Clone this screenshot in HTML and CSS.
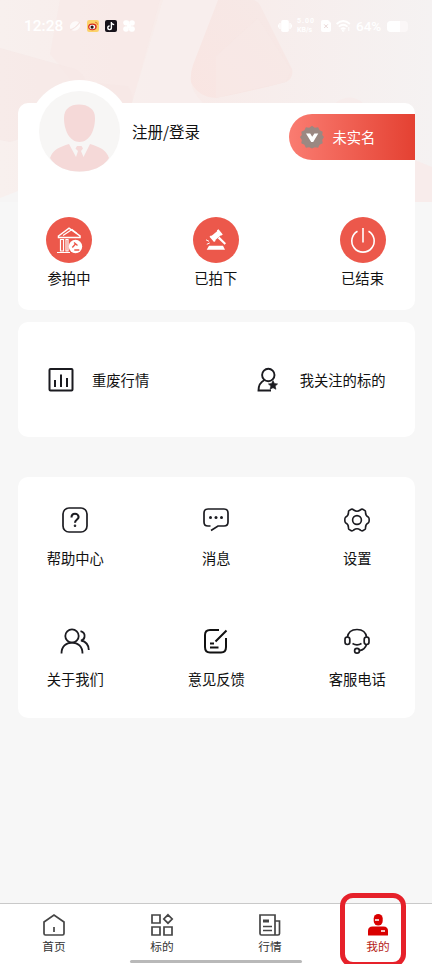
FILE: index.html
```html
<!DOCTYPE html>
<html lang="zh-CN">
<head>
<meta charset="utf-8">
<meta name="viewport" content="width=device-width, initial-scale=1">
<title>我的</title>
<link rel="stylesheet" href="styles.css">
</head>
<body>
<div class="app">
  <svg class="hero" viewBox="0 0 432 202" preserveAspectRatio="none">
    <defs>
      <linearGradient id="sky" x1="0" x2="1"><stop offset="0" stop-color="#f8f0ee"/><stop offset=".45" stop-color="#f8ebe9"/><stop offset="1" stop-color="#f5f2f2"/></linearGradient>
      <linearGradient id="gem" x1="0" x2="1" y1="1" y2="0"><stop offset="0" stop-color="#f9e5e2"/><stop offset="1" stop-color="#f6e9e7"/></linearGradient>
    </defs>
    <path fill="url(#sky)" d="M0 0h432v202H0z"/>
    <path fill="#f6e5e3" opacity=".5" d="M0 48 75 69Q84 73 86 82L128 86Q134 94 132 103L10 142 0 140z"/>
    <path fill="#f7e8e6" opacity=".5" d="M60 0H160L132 103H90L50 54z"/>
    <path fill="#f8f0ee" opacity=".7" d="M163 0H220L191 82Q192 92 203 103H132z"/>
    <path fill="url(#gem)" d="M218 0H254Q259 2 261 7L292 69Q294 78 286 82Q253 91 216 98Q198 97 191 82Q190 74 193 65z"/>
    <path fill="#f7eae8" opacity=".5" d="M216 56 258 18 291 70 286 82 216 98z"/>
    <path fill="#f7eceb" d="M335 103Q350 92 363 103z"/>
    <path fill="#f8eceb" d="M415 160 432 167V202H415z"/>
    <path fill="#f6f5f5" d="M0 198 18 191V202H0z"/>
  </svg>

  <header class="status">
    <div class="status-side">
      <span class="clock">12:28</span>
      <svg class="app-icon" viewBox="0 0 12 12"><ellipse cx="6" cy="6" rx="5.4" ry="4.5" transform="rotate(-35 6 6)" fill="#fff" opacity=".75"/><path d="M1 10Q7 8 11 2" fill="none" stroke="#f4e3e1" stroke-width="1.2"/></svg>
      <svg class="app-icon" viewBox="0 0 12 12"><rect width="12" height="12" rx="2.2" fill="#fcd26a"/><ellipse cx="5.4" cy="6.8" rx="4.3" ry="3.4" fill="#d52b20"/><ellipse cx="5.3" cy="7" rx="2.9" ry="2.2" fill="#fff"/><circle cx="5.1" cy="7.1" r="1.6" fill="#251716"/><path d="M8 2.2Q10.5 2 10.4 4.8" fill="none" stroke="#e5752f"/></svg>
      <svg class="app-icon" viewBox="0 0 12 12"><rect width="12" height="12" rx="2" fill="#17121a"/><path d="M6.4 2V7.8A1.8 1.8 0 1 1 4.6 6M6.4 2Q6.8 4.4 9.2 4.6" fill="none" stroke="#fff" stroke-width="1.4"/></svg>
      <svg class="app-icon" viewBox="0 0 12 12" fill="#fff"><rect x=".2" y=".2" width="6" height="5.3" rx="2.4"/><circle cx="9" cy="3" r="2.8"/><circle cx="3" cy="9" r="2.8"/><rect x="6" y="6.2" width="5.8" height="5.6" rx="2.4"/><path d="M4 4h4v4H4z"/></svg>
    </div>
    <div class="status-side status-right">
      <svg class="vibrate" viewBox="0 0 14 12" fill="#fff"><rect x="3.2" width="7.6" height="12" rx="1.8"/><rect x="1.3" y="3" width="1.3" height="6"/><rect x="0" y="4.5" width="1" height="3"/><rect x="11.4" y="3" width="1.3" height="6"/><rect x="13" y="4.5" width="1" height="3"/></svg>
      <span class="speed"><span class="speed-value">5.00</span><span>KB/s</span></span>
      <svg class="sim" viewBox="0 0 10 12"><path d="M2 0H7L10 3V10Q10 12 8 12H2Q0 12 0 10V2Q0 0 2 0" fill="#fff"/><path d="m3.2 4.4 3.6 3.6m0-3.6L3.2 8" stroke="#e8d6d5"/></svg>
      <svg class="wifi" viewBox="0 0 15 12" fill="none" stroke="#fff" stroke-width="1.7"><path d="M.6 4Q7.2-2 13.9 4M2.8 6.7Q7.2 2.8 11.6 6.7M5 9.1Q7.2 7.2 9.4 9.1"/><circle cx="7.2" cy="10.6" r=".4"/><path d="M12.8 7v4" stroke-width="1"/></svg>
      <span class="percent">64%</span>
      <span class="battery"><span class="battery-level"></span></span>
    </div>
  </header>

  <main>
    <section class="card profile">
      <div class="profile-head">
        <div class="avatar">
          <svg viewBox="0 0 81 81"><circle cx="40.5" cy="40.5" r="40.5" fill="#f7f6f5"/><path fill="#f5d9d8" d="M40 13.5C49 13.500 56 18 56 27C56 40 50 51 40.500 51C31 51 25 40 25 27C25 18 31 13.500 40 13.500z"/><path fill="#f5d9d8" d="M30 53 37 66 39 60 36.500 57.500 38 55H42.500L44 57.500 42 60 44.500 66 51 53C60 56 67 58 70 67C64 76 53 80.500 40.500 80.500C28 80.500 17 76 11 67C14 58 21 56 30 53z"/></svg>
        </div>
        <span class="login">注册/登录</span>
        <div class="verify">
          <svg viewBox="0 0 24 24"><path d="m12 .8 2.8 1.9 3.3-.5 1.5 3.1 3.1 1.4-.5 3.4L24 12l-1.800 2.900.5 3.400-3.100 1.400-1.500 3.100-3.300-.5L12 23.400l-2.800-1.100-3.300.5-1.500-3.100-3.100-1.400.5-3.400L0 12l1.800-1.900-.5-3.400 3.100-1.400 1.500-3.100 3.300.5z" fill="#9b8882"/><path d="M6 8.400h4.200l2 3.300 2.200-3.300h3.900L13.200 17h-2z" fill="#fff"/></svg>
          <span>未实名</span>
        </div>
      </div>
      <div class="bids">
        <div class="bid">
          <svg viewBox="0 0 46 46"><circle cx="23" cy="23" r="23" fill="#ec584b"/><g fill="none" stroke="#fff" stroke-width="1.200"><path d="M12.500 19 23 11.200 34 19V20.500H12.500z" stroke-width="1.500"/><path d="m17 18.500 9-6 5 4"/><path d="M14.500 22.500V34h3V22.500zM20 22.500V34h2V22.500zM11 35.500H24"/></g><circle cx="29.500" cy="29.500" r="6.700" fill="#fff"/><path d="m28 25.500 3.500 3m-2-1.500-3.200 3.500m2 2.500h5" stroke="#ec584b" stroke-width="1.400"/></svg>
          <span>参拍中</span>
        </div>
        <div class="bid">
          <svg viewBox="0 0 46 46"><circle cx="23" cy="23" r="23" fill="#ec584b"/><g fill="#fff"><path d="m16.500 19.800 1.400-1.300.8.300 5.400-4.600-.1-.9 1.500-1.100 4.300 5.200-1.400 1.200-.8-.2-5.200 4.600.1.900-1.500 1.200z"/><path d="m24.700 21.300 1.800-1.600 6.500 6.600-1.400 1.400z"/><path d="M16 28.700H30L32 32.700H13.700z"/></g><path d="m13 22.800 3 1.500m-2.200 3 3-1.400" stroke="#fff" fill="none"/></svg>
          <span>已拍下</span>
        </div>
        <div class="bid">
          <svg viewBox="0 0 46 46"><circle cx="23" cy="23" r="23" fill="#ec584b"/><path d="M17.500 14.200A11.200 11.200 0 1 0 28.500 14.200M23 11V25.500" fill="none" stroke="#fff" stroke-width="1.600"/></svg>
          <span>已结束</span>
        </div>
      </div>
    </section>

    <section class="card shortcuts">
      <div class="shortcut">
        <svg viewBox="0 0 26 26" fill="none" stroke="#1b1b20" stroke-width="2"><rect x="1.500" y="2" width="23" height="21.500" rx="1"/><path d="M7 13v7M13 7.500V20M19 11v9"/></svg>
        <span>重废行情</span>
      </div>
      <div class="shortcut">
        <svg viewBox="0 0 26 26" fill="none" stroke="#1b1b20" stroke-width="1.900"><circle cx="13.300" cy="8" r="6.200"/><path d="M9.500 13C5.500 15 3.500 18.500 3.500 23.500H16"/><path d="m18 13.600 1.400 2.900 3.200.4-2.400 2.200.7 3.200-2.900-1.600-2.900 1.600.7-3.200-2.400-2.200 3.200-.4z" fill="#1b1b20" stroke-width=".6"/></svg>
        <span>我关注的标的</span>
      </div>
    </section>

    <section class="card services">
      <div class="service">
        <svg viewBox="0 0 30 30" fill="none" stroke="#1b1b20" stroke-width="1.700"><rect x="3" y="3" width="24" height="24" rx="6"/><path d="M11.500 12.500C11.500 10 13 8.800 15 8.800S18.600 10.200 18.600 12C18.600 14.500 15 14.500 15 17.800" stroke-width="2.100"/><circle cx="15" cy="20.800" r=".5" stroke-width="1.600"/></svg>
        <span>帮助中心</span>
      </div>
      <div class="service">
        <svg viewBox="0 0 30 30" fill="none" stroke="#1b1b20" stroke-width="1.700"><path d="M9.500 21H7Q3 21 3 17V8Q3 4 7 4H23Q27 4 27 8V17Q27 21 23 21H17L10 25.500"/><g fill="#1b1b20" stroke="none"><circle cx="9.500" cy="12.500" r="1.500"/><circle cx="15" cy="12.500" r="1.500"/><circle cx="20.500" cy="12.500" r="1.500"/></g></svg>
        <span>消息</span>
      </div>
      <div class="service">
        <svg viewBox="0 0 30 30" fill="none" stroke="#1b1b20" stroke-width="1.600" stroke-linejoin="round"><path d="M9.300 4.200Q10.800 4 11.700 5Q15 7.500 18.300 5Q19.200 4 20.700 4.200L23 5.600Q23.700 6.200 23.500 7.300Q23.500 11 26.500 12.300Q27.200 13 27.200 15T26.500 17.700Q23.500 19 23.500 22.700Q23.700 23.800 23 24.400L20.700 25.800Q19.200 26 18.300 25Q15 22.500 11.700 25Q10.800 26 9.300 25.800L7 24.400Q6.300 23.800 6.500 22.700Q6.500 19 3.500 17.700Q2.800 17 2.800 15T3.500 12.300Q6.500 11 6.500 7.300Q6.300 6.200 7 5.600z"/><circle cx="15" cy="15" r="4.400"/></svg>
        <span>设置</span>
      </div>
      <div class="service">
        <svg viewBox="0 0 30 30" fill="none" stroke="#1b1b20" stroke-width="1.800"><circle cx="12" cy="10" r="6.700"/><path d="M1.500 27.500C1.500 20.500 6 16.700 12 16.700S22.500 20.500 22.500 27.500M20.500 5.200C23.500 6 25 8 24.500 11C24.200 13 22.700 14 21 14.500C25.500 15.500 28.700 19 28.800 24"/></svg>
        <span>关于我们</span>
      </div>
      <div class="service">
        <svg viewBox="0 0 30 30" fill="none" stroke="#111" stroke-width="2"><path d="M18 4H9Q4 4 4 9V21Q4 26.500 9 26.500H20Q25 26.500 25 21V12M25.500 4.500 14.500 15.500M9 17.500h4M9 21.500h8.500"/></svg>
        <span>意见反馈</span>
      </div>
      <div class="service">
        <svg viewBox="0 0 30 30" fill="none" stroke="#1b1b20" stroke-width="1.700"><path d="M5.300 11.500C6 6.500 9.500 3.500 15 3.500S24 6.500 24.700 11.500M24.500 18.500C23.500 22 21 24 17.500 24.600M10.500 17.500Q15 20.200 19.500 17.500"/><rect x="3" y="11" width="4.800" height="7.500" rx="2.400"/><rect x="22.200" y="11" width="4.800" height="7.500" rx="2.400"/><circle cx="15" cy="24.700" r="2.400"/></svg>
        <span>客服电话</span>
      </div>
    </section>
  </main>

  <nav class="tabs">
    <div class="tab">
      <svg viewBox="0 0 24 24" fill="none" stroke="#454545" stroke-width="1.700"><path d="M2 9 12 2l10 7V20.500Q22 22 20.500 22H3.500Q2 22 2 20.500zM12 14v5"/></svg>
      <span>首页</span>
    </div>
    <div class="tab">
      <svg viewBox="0 0 24 24" fill="none" stroke="#454545" stroke-width="1.700"><path d="M2 2h8v8H2zM18 1.800 22.200 6 18 10.200 13.800 6zM2 14h8v8H2zM14 14h8v8h-8z"/></svg>
      <span>标的</span>
    </div>
    <div class="tab">
      <svg viewBox="0 0 24 24" fill="none" stroke="#454545" stroke-width="1.700"><path d="M17 22H3.500Q2 22 2 20.500V2H17V22H20Q21.500 22 21.500 20.500V8H17M5 13.500H14M5 17.500H14"/><path d="M5 8H11" stroke-width="3"/></svg>
      <span>行情</span>
    </div>
    <div class="tab active">
      <svg viewBox="0 0 24 24" fill="#d90000"><rect x="7.700" y="1" width="9" height="11.500" rx="4.500"/><path d="M2 22V18Q2 13.500 6.500 13.500H17.500Q22 13.500 22 18V22Q22 22.500 21.500 22.500H2.500Q2 22.500 2 22z"/><path d="M9 7h4M15 18h4" stroke="#fff" stroke-width="1.300"/></svg>
      <span>我的</span>
      <i class="marker"></i>
    </div>
    <i class="home-bar"></i>
  </nav>
</div>
</body>
</html>
```
FILE: styles.css
```css
* { box-sizing: border-box; }

body {
  margin: 0;
  background: #f7f7f7;
  color: #111;
  font: 14.3px/20px "Noto Sans CJK SC", sans-serif;
}

svg { display: block; flex: none; }

.app {
  position: relative;
  display: flex;
  flex-direction: column;
  height: 964px;
  overflow: hidden;
}

.hero {
  position: absolute;
  inset: 0 0 auto;
  width: 432px;
  height: 202px;
}

.status {
  position: relative;
  display: flex;
  justify-content: space-between;
  height: 103px;
  padding: 16px 24px 0;
  color: #fff;
  font-family: Roboto, sans-serif;
}

.status-side {
  display: flex;
  align-items: center;
  gap: 6px;
  height: 20px;
}

.status-right { gap: 5px; }
.clock { width: 39px; font-size: 15.5px; font-weight: 500; }
.app-icon { width: 12px; height: 12px; }
.vibrate { width: 14px; height: 12px; }
.speed { display: flex; flex-direction: column; width: 19px; font-size: 7px; font-weight: 700; line-height: 9px; }
.speed-value { letter-spacing: 1px; }
.sim { width: 10px; height: 12px; }
.wifi { width: 15px; height: 12px; }
.percent { width: 26px; font-size: 13.5px; font-weight: 500; }

.battery {
  width: 21px;
  height: 11px;
  overflow: hidden;
  border-radius: 4px;
  background: #fbf7f7;
}

.battery-level { display: block; width: 13px; height: 11px; background: #fff; }

main {
  position: relative;
  flex: 1;
  padding: 0 17.5px 0 18px;
}

.card { border-radius: 10px; background: #fff; }

.profile { height: 207px; margin-bottom: 12px; }

.profile-head {
  display: flex;
  align-items: flex-start;
  height: 114px;
}

.avatar {
  width: 103px;
  height: 103px;
  margin: -23px 0 0 10px;
  padding: 11px;
  border-radius: 50%;
  background: #fff;
}

.avatar svg { width: 81px; height: 81px; }
.login { margin: 18px 0 0 1px; font-size: 15.5px; }

.verify {
  display: flex;
  align-items: center;
  gap: 9px;
  width: 126px;
  height: 46px;
  margin: 11px 0 0 auto;
  padding-left: 11px;
  border-radius: 23px 0 0 23px;
  background: linear-gradient(90deg, #fa7c71, #e44132);
  color: #fff;
}

.verify svg { width: 24px; height: 24px; }

.bids { display: flex; justify-content: space-between; padding: 0 29px 0 28px; }

.bid {
  display: flex;
  flex-direction: column;
  align-items: center;
  gap: 5px;
  width: 46px;
}

.bid svg { width: 46px; height: 46px; }

.shortcuts {
  display: flex;
  align-items: center;
  justify-content: space-between;
  height: 115px;
  margin-bottom: 40px;
  padding: 0 29px 0 30px;
}

.shortcut { display: flex; align-items: center; gap: 18px; }
.shortcut svg { width: 26px; height: 26px; }
.shortcut:last-child { gap: 19px; }

.services {
  display: grid;
  grid-template-columns: repeat(3, 141px);
  grid-auto-rows: 121px;
  justify-content: center;
  height: 241px;
  padding-top: 28px;
}

.service {
  display: flex;
  flex-direction: column;
  align-items: center;
  gap: 13px;
}

.service svg { width: 30px; height: 30px; }

.tabs {
  position: relative;
  display: flex;
  height: 61px;
  border-top: 1px solid #c9c9c9;
  background: #fff;
}

.tab {
  position: relative;
  display: flex;
  flex: 1;
  flex-direction: column;
  align-items: center;
  padding-top: 9px;
  color: #333;
  font-size: 11.7px;
  line-height: 18px;
}

.tab svg { width: 24px; height: 24px; }
.tab.active { color: #b51b15; }

.marker {
  position: absolute;
  top: -11px;
  left: 16px;
  width: 66px;
  height: 74px;
  border: 5px solid #e6212a;
  border-radius: 13px;
}

.home-bar {
  position: absolute;
  bottom: 1px;
  left: 130px;
  width: 172px;
  height: 3px;
  border-radius: 2px;
  background: #b9b9b9;
}
```
